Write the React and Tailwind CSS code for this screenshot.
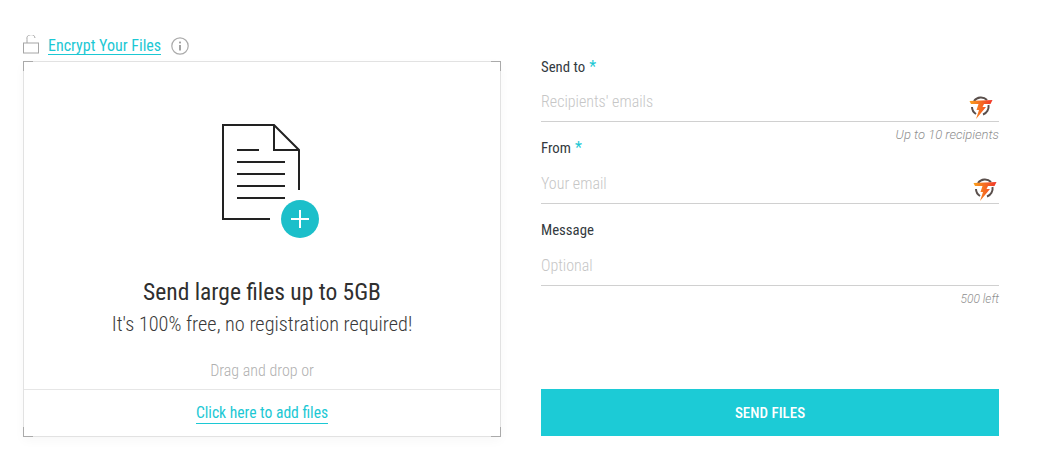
const teal = 'text-[#1cc8d4]';

const Logo = ({ className }) => (
  <svg width="24" height="25" viewBox="0 0 24 25" className={className} fill="none">
    <defs>
      <linearGradient id="bar" x1="0" y1="0" x2="1" y2="0">
        <stop offset="0" stopColor="#f9a01b" />
        <stop offset="1" stopColor="#f1352a" />
      </linearGradient>
    </defs>
    <path d="M5 6 A8.5 8.5 0 0 1 18 5 M19.5 10 A8.5 8.5 0 0 1 14 19.5 M7 19 A8.5 8.5 0 0 1 3 12" stroke="#5a4f4c" strokeWidth="2" />
    <path d="M0.5 6 L23.5 5 L21.5 9 L15 9 L13.5 12 L17 12 L7 24 L10 15 L7.5 15 L9.5 9 L2 9 Z" fill="url(#bar)" />
  </svg>
);

const Field = ({ label, required, placeholder, logoClass, note, noteClass, rowClass, className }) => (
  <div className={className}>
    <div className="h-[18px] text-[14.8px] leading-[18px] text-[#333a40]">
      {label}
      {required && <span className={`ml-[4px] text-[16px] ${teal}`}>*</span>}
    </div>
    <div className={`flex items-center justify-between border-b border-[#d0d0d0] ${rowClass}`}>
      <span className="mt-[7px] text-[16px] font-light text-[#c6c6c6]">{placeholder}</span>
      {logoClass && <Logo className={logoClass} />}
    </div>
    {note && <div className={`mt-[6px] text-right font-light italic leading-[14px] text-[#8f8f8f] [font-stretch:100%] ${noteClass}`}>{note}</div>}
  </div>
);

export default function App() {
  return (
    <div className="h-[462px] w-[1041px] overflow-hidden bg-white font-['Roboto',sans-serif] [font-stretch:75%]">
      <div className="flex gap-[40px] pl-[23px] pt-[35px]">
        <div className="w-[478px]">
          <div className="flex h-[26px] items-start">
            <svg width="17" height="19" viewBox="0 0 17 19" fill="none" stroke="#a6a6a6" strokeWidth="1">
              <rect x="0.5" y="8" width="15" height="10" />
              <path d="M4 8 V4.5 a4 4 0 0 1 8 -1.5" />
            </svg>
            <a className={`ml-[8px] mt-[2px] border-b border-[#1cc8d4] text-[16px] leading-[17px] ${teal}`}>Encrypt Your Files</a>
            <svg width="18" height="18" viewBox="0 0 18 18" fill="none" className="ml-[10px] mt-[2px]">
              <circle cx="9" cy="9" r="8.2" stroke="#ababab" strokeWidth="1.2" />
              <rect x="8.1" y="8" width="1.8" height="5.5" fill="#9a9a9a" />
              <rect x="8.1" y="4.6" width="1.8" height="1.8" fill="#9a9a9a" />
            </svg>
          </div>
          <div className="relative flex h-[376px] flex-col items-center border border-[#e2e2e2] shadow-[0_4px_10px_rgba(0,0,0,0.03)]">
            <span className="absolute -left-px -top-px h-[10px] w-[10px] border-l border-t border-[#aaaaaa]" />
            <span className="absolute -right-px -top-px h-[10px] w-[10px] border-r border-t border-[#aaaaaa]" />
            <span className="absolute -bottom-px -left-px h-[10px] w-[10px] border-b border-l border-[#aaaaaa]" />
            <span className="absolute -bottom-px -right-px h-[10px] w-[10px] border-b border-r border-[#aaaaaa]" />
            <svg width="100" height="118" viewBox="0 0 100 118" fill="none" className="ml-[18px] mt-[61px]">
              <g stroke="#222222" strokeWidth="2">
                <path d="M49 96 H2 V2 H53 L78 27 V67" />
                <path d="M53 2 V27 H78" />
                <path d="M16 27 H38 M16 39 H64 M16 51 H64 M16 63 H64 M16 75 H64" />
              </g>
              <circle cx="79" cy="96" r="19" fill="#1cbfca" />
              <path d="M79 87 V105 M70 96 H88" stroke="#ffffff" strokeWidth="2" />
            </svg>
            <div className="mt-[35px] text-[23.5px] leading-[32px] text-[#2f2f2f]">Send large files up to 5GB</div>
            <div className="mt-[1px] text-[20.3px] font-light leading-[30px] text-[#3a3a3a]">It's 100% free, no registration required!</div>
            <div className="mt-[22px] text-[16px] font-light leading-[20px] text-[#b0b0b0]">Drag and drop or</div>
            <div className="mt-auto flex h-[47px] w-full items-center justify-center border-t border-[#e6e6e6] pt-[2px]">
              <a className={`border-b border-[#1cc8d4] text-[15.6px] leading-[19px] ${teal}`}>Click here to add files</a>
            </div>
          </div>
        </div>
        <div className="flex w-[458px] flex-col pt-[23px]">
          <Field label="Send to" required placeholder="Recipients' emails" rowClass="h-[46px]" logoClass="mr-[6px] mt-[18px]" note="Up to 10 recipients" noteClass="text-[13px]" />
          <Field label="From" required placeholder="Your email" rowClass="h-[47px]" logoClass="mr-[2px] mt-[18px]" className="mt-[-3px]" />
          <Field label="Message" placeholder="Optional" rowClass="h-[47px]" note="500 left" noteClass="text-[12px]" className="mt-[17px]" />
          <button className="mt-[83px] h-[47px] w-full bg-[#1ccbd6] pt-[2px] text-[15px] font-medium text-white">SEND FILES</button>
        </div>
      </div>
    </div>
  );
}
